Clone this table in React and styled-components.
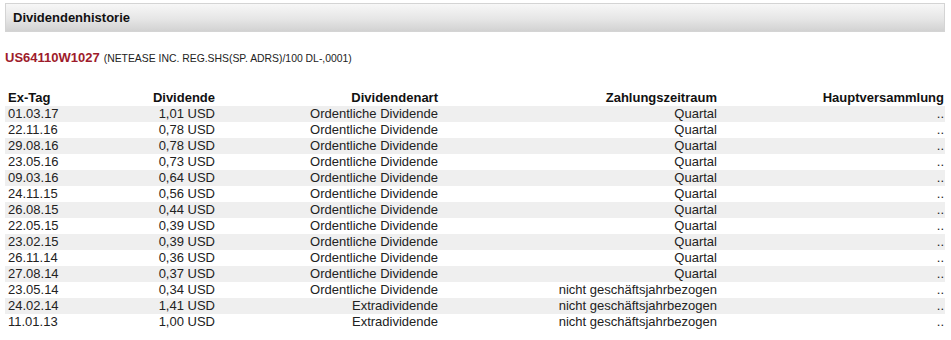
import styled, { createGlobalStyle } from "styled-components";

const GlobalStyle = createGlobalStyle`
  body {
    margin: 0;
    background: #fff;
    font-family: "Liberation Sans", Arial, sans-serif;
    color: #222;
  }
`;

const Page = styled.div`
  width: 940px;
  padding: 3px 0 0 5px;
`;

const TitleBar = styled.div`
  height: 27px;
  display: flex;
  align-items: center;
  padding-left: 7px;
  border: 1px solid #d4d4d4;
  background: linear-gradient(#f7f7f7, #e6e6e6 55%, #d2d2d2);
  font-size: 13px;
  font-weight: bold;
  color: #111;
`;

const IsinLine = styled.div`
  margin-top: 18px;
  display: flex;
  align-items: baseline;
  gap: 4px;
`;

const Isin = styled.span`
  color: #9e1b2b;
  font-weight: bold;
  font-size: 13px;
`;

const Name = styled.span`
  font-size: 10.4px;
  color: #222;
`;

const Table = styled.table`
  margin-top: 25px;
  width: 940px;
  border-collapse: collapse;
  table-layout: fixed;
  font-size: 13px;
`;

const Th = styled.th`
  text-align: ${(p) => p.$align || "right"};
  font-weight: bold;
  padding: 0 ${(p) => (p.$align === "left" ? "0 0 3px" : "1px 0 0")};
  height: 16px;
  line-height: 16px;
  color: #111;
`;

const Row = styled.tr`
  background: ${(p) => (p.$odd ? "#efefef" : "#fff")};
`;

const Td = styled.td`
  text-align: ${(p) => p.$align || "right"};
  padding: 0 ${(p) => (p.$align === "left" ? "0 0 3px" : "1px 0 0")};
  height: 16px;
  line-height: 16px;
  white-space: nowrap;
`;

const rows = [
  ["01.03.17", "1,01 USD", "Ordentliche Dividende", "Quartal"],
  ["22.11.16", "0,78 USD", "Ordentliche Dividende", "Quartal"],
  ["29.08.16", "0,78 USD", "Ordentliche Dividende", "Quartal"],
  ["23.05.16", "0,73 USD", "Ordentliche Dividende", "Quartal"],
  ["09.03.16", "0,64 USD", "Ordentliche Dividende", "Quartal"],
  ["24.11.15", "0,56 USD", "Ordentliche Dividende", "Quartal"],
  ["26.08.15", "0,44 USD", "Ordentliche Dividende", "Quartal"],
  ["22.05.15", "0,39 USD", "Ordentliche Dividende", "Quartal"],
  ["23.02.15", "0,39 USD", "Ordentliche Dividende", "Quartal"],
  ["26.11.14", "0,36 USD", "Ordentliche Dividende", "Quartal"],
  ["27.08.14", "0,37 USD", "Ordentliche Dividende", "Quartal"],
  ["23.05.14", "0,34 USD", "Ordentliche Dividende", "nicht geschäftsjahrbezogen"],
  ["24.02.14", "1,41 USD", "Extradividende", "nicht geschäftsjahrbezogen"],
  ["11.01.13", "1,00 USD", "Extradividende", "nicht geschäftsjahrbezogen"],
];

export default function App() {
  return (
    <Page>
      <GlobalStyle />
      <TitleBar>Dividendenhistorie</TitleBar>
      <IsinLine>
        <Isin>US64110W1027</Isin>
        <Name>(NETEASE INC. REG.SHS(SP. ADRS)/100 DL-,0001)</Name>
      </IsinLine>
      <Table>
        <colgroup>
          <col style={{ width: 105 }} />
          <col style={{ width: 106 }} />
          <col style={{ width: 223 }} />
          <col style={{ width: 279 }} />
          <col style={{ width: 227 }} />
        </colgroup>
        <thead>
          <tr>
            <Th $align="left">Ex-Tag</Th>
            <Th>Dividende</Th>
            <Th>Dividendenart</Th>
            <Th>Zahlungszeitraum</Th>
            <Th>Hauptversammlung</Th>
          </tr>
        </thead>
        <tbody>
          {rows.map((r, i) => (
            <Row key={r[0]} $odd={i % 2 === 0}>
              <Td $align="left">{r[0]}</Td>
              <Td>{r[1]}</Td>
              <Td>{r[2]}</Td>
              <Td>{r[3]}</Td>
              <Td>..</Td>
            </Row>
          ))}
        </tbody>
      </Table>
    </Page>
  );
}
